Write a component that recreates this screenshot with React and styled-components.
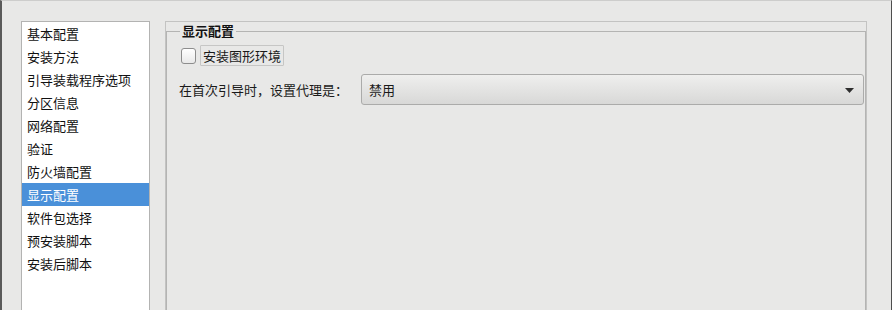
import React from 'react';
import styled, { createGlobalStyle } from 'styled-components';

const GlobalStyle = createGlobalStyle`
  html, body {
    margin: 0;
    padding: 0;
    background: #e8e8e7;
  }
  body {
    width: 892px;
    height: 310px;
    overflow: hidden;
    font-family: "Noto Sans CJK SC", "DejaVu Sans", sans-serif;
    font-size: 13px;
    color: #1a1a1a;
  }
`;

const Window = styled.div`
  box-sizing: border-box;
  display: flex;
  align-items: flex-start;
  gap: 15px;
  width: 892px;
  height: 310px;
  padding: 20px 24px 0 19px;
  background: #e8e8e7;
  border-top: 1px solid #cdcdcc;
  border-left: 2px solid #5a5a5a;
  border-right: 1px solid #4e4e4e;
  overflow: hidden;
`;

const SideList = styled.ul`
  box-sizing: border-box;
  flex: 0 0 129px;
  height: 320px;
  margin: 0;
  padding: 0;
  list-style: none;
  background: #ffffff;
  border: 1px solid #b3b3b2;
`;

const SideItem = styled.li`
  height: 23px;
  line-height: 23px;
  padding-left: 5px;
  white-space: nowrap;
  background: ${props => (props.active ? '#4a90d9' : 'transparent')};
  color: ${props => (props.active ? '#ffffff' : '#111111')};
`;

const Panel = styled.div`
  box-sizing: border-box;
  flex: 0 0 702px;
  height: 320px;
  padding-top: 2px;
  border: 1px solid #c3c3c2;
`;

const Group = styled.fieldset`
  box-sizing: border-box;
  height: 330px;
  margin: 0;
  padding: 7px 1px 0 12px;
  border: 1px solid #b4b4b3;
  border-bottom: none;
  min-width: 0;
`;

const GroupTitle = styled.legend`
  margin-left: 1px;
  padding: 0 2px;
  font-weight: bold;
  font-size: 13px;
  line-height: 14px;
  color: #111111;
`;

const CheckRow = styled.label`
  display: flex;
  align-items: center;
  margin-left: 2px;
  height: 21px;
`;

const CheckBox = styled.span`
  box-sizing: border-box;
  width: 15px;
  height: 16px;
  border: 1px solid #8d8d8d;
  border-radius: 3px;
  background: linear-gradient(#ffffff, #e9e9e9);
`;

const CheckLabel = styled.span`
  box-sizing: border-box;
  height: 21px;
  line-height: 19px;
  margin-left: 4px;
  padding: 0 2px;
  border: 1px solid #c6c6c5;
  border-radius: 1px;
`;

const FieldRow = styled.div`
  display: flex;
  align-items: center;
  margin-top: 8px;
`;

const FieldLabel = styled.span`
  flex: 0 0 182px;
  white-space: nowrap;
`;

const Combo = styled.div`
  box-sizing: border-box;
  flex: 1;
  display: flex;
  align-items: center;
  justify-content: space-between;
  height: 31px;
  padding: 0 9px 0 7px;
  border: 1px solid #ababaa;
  border-radius: 3px;
  background: linear-gradient(#efefee, #d8d8d7);
`;

const Arrow = styled.svg`
  width: 9px;
  height: 5px;
  margin-top: 1px;
`;

const items = [
  '基本配置',
  '安装方法',
  '引导装载程序选项',
  '分区信息',
  '网络配置',
  '验证',
  '防火墙配置',
  '显示配置',
  '软件包选择',
  '预安装脚本',
  '安装后脚本',
];

export default function App() {
  return (
    <>
      <GlobalStyle />
      <Window>
        <SideList>
          {items.map(item => (
            <SideItem key={item} active={item === '显示配置'}>
              {item}
            </SideItem>
          ))}
        </SideList>
        <Panel>
          <Group>
            <GroupTitle>显示配置</GroupTitle>
            <CheckRow>
              <CheckBox />
              <CheckLabel>安装图形环境</CheckLabel>
            </CheckRow>
            <FieldRow>
              <FieldLabel>在首次引导时，设置代理是：</FieldLabel>
              <Combo>
                <span>禁用</span>
                <Arrow viewBox="0 0 9 5">
                  <path d="M0 0 H9 L4.5 5 Z" fill="#2e2e2e" />
                </Arrow>
              </Combo>
            </FieldRow>
          </Group>
        </Panel>
      </Window>
    </>
  );
}
